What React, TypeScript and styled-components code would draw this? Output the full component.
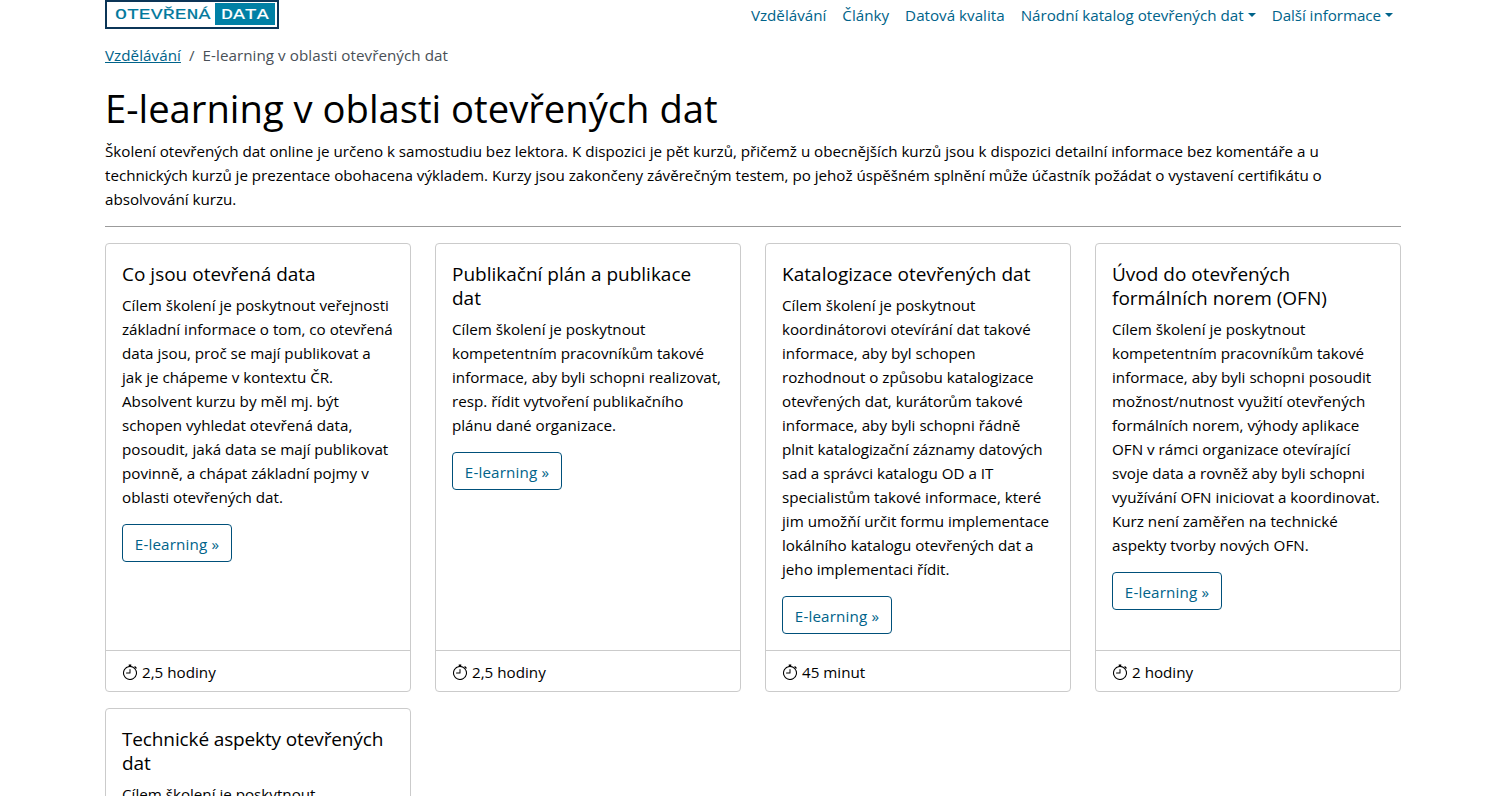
import React from "react";
import styled, { createGlobalStyle } from "styled-components";

const GlobalStyle = createGlobalStyle`
  *, *::before, *::after { box-sizing: border-box; }
  html, body { margin: 0; height: 796px; overflow: hidden; background: #fff; }
  body {
    color: #000;
    font-family: "Open Sans", "Noto Sans", sans-serif;
    font-size: 15.2px;
    line-height: 24px;
  }
`;

const Container = styled.div`
  width: 1296px;
  margin-left: 105px;
`;

const Header = styled.header`
  display: flex;
  justify-content: space-between;
  height: 43px;
`;

const Logo = styled.a`
  display: flex;
  width: 174px;
  height: 29px;
  padding: 1px 2px 2px 8px;
  border: 2px solid #0b3557;
  color: #007196;
  text-decoration: none;
`;

const LogoWord = styled.span<{ $filled?: boolean }>`
  display: block;
  width: ${(p) => (p.$filled ? "60px" : "100px")};
  height: 22px;
  padding-left: ${(p) => (p.$filled ? "6px" : "0")};
  background: ${(p) => (p.$filled ? "#0080a5" : "transparent")};
  color: ${(p) => (p.$filled ? "#fff" : "#00789c")};
  font: 14px/24px "Liberation Mono", monospace;
  -webkit-text-stroke: 0.15px currentColor;
  white-space: nowrap;
`;

const LogoText = styled.span<{ $stretch: number }>`
  display: inline-block;
  transform: scaleX(${(p) => p.$stretch});
  transform-origin: left center;
`;

const Nav = styled.nav`
  display: flex;
  gap: 16px;
  padding: 3px 8px 0 0;
`;

const NavLink = styled.a<{ $tracking?: number }>`
  color: #00638a;
  white-space: nowrap;
  text-decoration: none;
  letter-spacing: ${(p) => p.$tracking ?? 0}px;
`;

const Caret = styled.span`
  display: inline-block;
  margin-left: 4px;
  vertical-align: 4px;
  border-top: 4.8px solid currentColor;
  border-left: 4.4px solid transparent;
  border-right: 4.4px solid transparent;
`;

const Breadcrumb = styled.nav`
  display: flex;
  gap: 8px;
  height: 24px;
  color: #495057;
  letter-spacing: 0.05px;
`;

const CrumbLink = styled.a`
  color: #00638a;
  text-decoration: underline;
`;

const Title = styled.h1`
  margin: 17px 0 7px;
  font-size: 38.2px;
  font-weight: 400;
  line-height: 48px;
  white-space: nowrap;
`;

const Lead = styled.p`
  margin: 0;
  letter-spacing: -0.02px;
`;

const Line = styled.span`
  display: block;
  white-space: nowrap;
`;

const Divider = styled.hr`
  margin: 15px 0 16px;
  border: 0;
  border-top: 1px solid #9b9b9b;
`;

const Grid = styled.main`
  display: grid;
  grid-template-columns: repeat(4, 306px);
  column-gap: 24px;
  row-gap: 16px;
`;

const Card = styled.article`
  display: flex;
  flex-direction: column;
  border: 1px solid #cbcbcb;
  border-radius: 4px;
`;

const CardBody = styled.div`
  flex: 1;
  padding: 18px 16px 16px;
`;

const CardTitle = styled.h5<{ $tracking?: number }>`
  margin: 0 0 7px;
  font-size: 19px;
  font-weight: 400;
  line-height: 24px;
  letter-spacing: ${(p) => p.$tracking ?? 0}px;
`;

const CardText = styled.p`
  margin: 0 0 15px;
  letter-spacing: -0.01px;
`;

const Button = styled.a`
  display: flex;
  align-items: center;
  justify-content: center;
  width: 110px;
  height: 38px;
  padding-top: 2px;
  border: 1px solid #00507a;
  border-radius: 4px;
  color: #00638a;
  letter-spacing: 0.15px;
  text-decoration: none;
`;

const CardFooter = styled.footer`
  display: flex;
  align-items: center;
  gap: 4px;
  height: 41px;
  padding: 2px 16px 0;
  border-top: 1px solid #cbcbcb;
`;

const Stopwatch = () => (
  <svg width="16" height="16" viewBox="0 0 16 16" fill="currentColor">
    <path d="M8.5 5.6a.5.5 0 1 0-1 0v2.9h-3a.5.5 0 0 0 0 1H8a.5.5 0 0 0 .5-.5V5.6z" />
    <path d="M6.5 1A.5.5 0 0 1 7 .5h2a.5.5 0 0 1 0 1v.57c1.36.196 2.594.78 3.584 1.64a.715.715 0 0 1 .012-.013l.354-.354-.354-.353a.5.5 0 0 1 .707-.708l1.414 1.415a.5.5 0 1 1-.707.707l-.353-.354-.354.354a.512.512 0 0 1-.013.012A7 7 0 1 1 7 2.071V1.5a.5.5 0 0 1-.5-.5zM8 3a6 6 0 1 0 .001 12A6 6 0 0 0 8 3z" />
  </svg>
);

const lead = [
  "Školení otevřených dat online je určeno k samostudiu bez lektora. K dispozici je pět kurzů, přičemž u obecnějších kurzů jsou k dispozici detailní informace bez komentáře a u",
  "technických kurzů je prezentace obohacena výkladem. Kurzy jsou zakončeny závěrečným testem, po jehož úspěšném splnění může účastník požádat o vystavení certifikátu o",
  "absolvování kurzu.",
];

interface Course {
  title: string[];
  tracking?: number;
  text: string[];
  time?: string;
}

const courses: Course[] = [
  {
    title: ["Co jsou otevřená data"],
    text: [
      "Cílem školení je poskytnout veřejnosti",
      "základní informace o tom, co otevřená",
      "data jsou, proč se mají publikovat a",
      "jak je chápeme v kontextu ČR.",
      "Absolvent kurzu by měl mj. být",
      "schopen vyhledat otevřená data,",
      "posoudit, jaká data se mají publikovat",
      "povinně, a chápat základní pojmy v",
      "oblasti otevřených dat.",
    ],
    time: "2,5 hodiny",
  },
  {
    title: ["Publikační plán a publikace", "dat"],
    text: [
      "Cílem školení je poskytnout",
      "kompetentním pracovníkům takové",
      "informace, aby byli schopni realizovat,",
      "resp. řídit vytvoření publikačního",
      "plánu dané organizace.",
    ],
    time: "2,5 hodiny",
  },
  {
    title: ["Katalogizace otevřených dat"],
    tracking: 0.03,
    text: [
      "Cílem školení je poskytnout",
      "koordinátorovi otevírání dat takové",
      "informace, aby byl schopen",
      "rozhodnout o způsobu katalogizace",
      "otevřených dat, kurátorům takové",
      "informace, aby byli schopni řádně",
      "plnit katalogizační záznamy datových",
      "sad a správci katalogu OD a IT",
      "specialistům takové informace, které",
      "jim umožňí určit formu implementace",
      "lokálního katalogu otevřených dat a",
      "jeho implementaci řídit.",
    ],
    time: "45 minut",
  },
  {
    title: ["Úvod do otevřených", "formálních norem (OFN)"],
    text: [
      "Cílem školení je poskytnout",
      "kompetentním pracovníkům takové",
      "informace, aby byli schopni posoudit",
      "možnost/nutnost využití otevřených",
      "formálních norem, výhody aplikace",
      "OFN v rámci organizace otevírající",
      "svoje data a rovněž aby byli schopni",
      "využívání OFN iniciovat a koordinovat.",
      "Kurz není zaměřen na technické",
      "aspekty tvorby nových OFN.",
    ],
    time: "2 hodiny",
  },
  {
    title: ["Technické aspekty otevřených", "dat"],
    tracking: -0.13,
    text: ["Cílem školení je poskytnout"],
  },
];

const Lines = ({ of }: { of: string[] }) => (
  <>
    {of.map((line) => (
      <Line key={line}>{line}</Line>
    ))}
  </>
);

export default function App() {
  return (
    <>
      <GlobalStyle />
      <Container>
        <Header>
          <Logo>
            <LogoWord>
              <LogoText $stretch={1.42}>OTEVŘENÁ</LogoText>
            </LogoWord>
            <LogoWord $filled>
              <LogoText $stretch={1.42}>DATA</LogoText>
            </LogoWord>
          </Logo>
          <Nav>
            <NavLink>Vzdělávání</NavLink>
            <NavLink>Články</NavLink>
            <NavLink>Datová kvalita</NavLink>
            <NavLink>
              Národní katalog otevřených dat
              <Caret />
            </NavLink>
            <NavLink $tracking={-0.06}>
              Další informace
              <Caret />
            </NavLink>
          </Nav>
        </Header>
        <Breadcrumb>
          <CrumbLink>Vzdělávání</CrumbLink>
          <span>/</span>
          <span>E-learning v oblasti otevřených dat</span>
        </Breadcrumb>
        <Title>E-learning v oblasti otevřených dat</Title>
        <Lead>
          <Lines of={lead} />
        </Lead>
        <Divider />
        <Grid>
          {courses.map((course) => (
            <Card key={course.title[0]}>
              <CardBody>
                <CardTitle $tracking={course.tracking}>
                  <Lines of={course.title} />
                </CardTitle>
                <CardText>
                  <Lines of={course.text} />
                </CardText>
                {course.time && <Button>E-learning »</Button>}
              </CardBody>
              {course.time && (
                <CardFooter>
                  <Stopwatch />
                  {course.time}
                </CardFooter>
              )}
            </Card>
          ))}
        </Grid>
      </Container>
    </>
  );
}
